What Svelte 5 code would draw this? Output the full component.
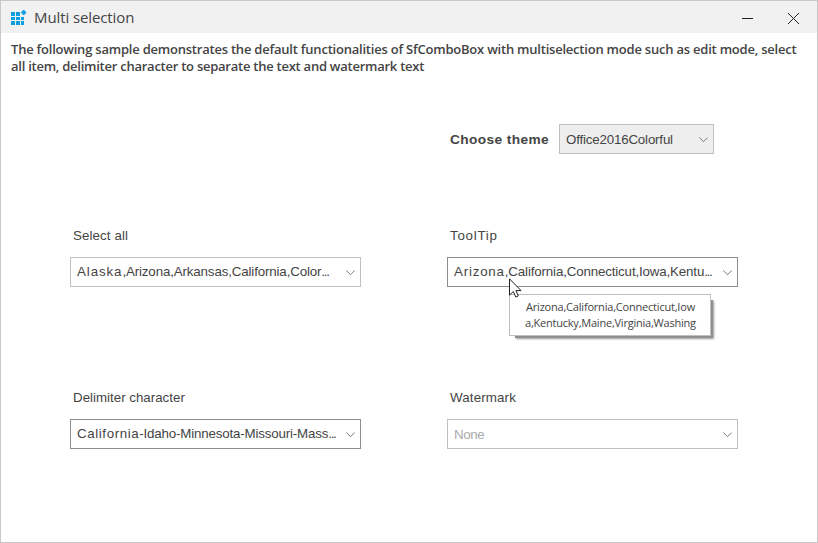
<script>
  const fields = [
    { label: 'Select all', labelGap: 0.1, border: '#c0c0c0', parts: [['Alaska', 0.9], [',Arizona,Arkansas,California,Color', -0.14], ['...', -1.3]] },
    { label: 'ToolTip', labelGap: 0.75, border: '#8e8e8e', parts: [['Arizona', 0.8], [',California,Connecticut,Iowa,Kentu', -0.15], ['...', -1.3]] },
    { label: 'Delimiter character', labelGap: 0, border: '#8e8e8e', parts: [['California', 0.6], ['-Idaho-Minnesota-Missouri-Mass', -0.17], ['...', -1.3]] },
    { label: 'Watermark', labelGap: 0.15, border: '#c0c0c0', placeholder: true, parts: [['None', -0.4]] }
  ];
</script>

{#snippet chevron()}
  <svg class="chevron" width="9" height="6" viewBox="0 0 9 6"><path d="M.3 .5 4.5 4.7 8.7 .5" /></svg>
{/snippet}

<div class="window">
  <header>
    <svg class="logo" width="16" height="16" viewBox="0 0 16 16" fill="#119ee0">
      <path d="M0 2h4v4H0zM5 2h4v4H5zM0 7h4v3H0zM5 7h4v3H5zM10 7h3v3h-3zM0 11h4v4H0zM5 11h4v4H5zM10 11h3v4h-3z" />
      <path d="M12 0h1.5l.6 1.4h1v2h-1L13.5 5H12l-.8-1.6h-1v-2h1z" />
    </svg>
    <h1>Multi selection</h1>
    <svg class="controls" width="60" height="14" viewBox="0 0 60 14">
      <path d="M0 7.5h11" /><path d="M46 2l11 11M57 2l-11 11" />
    </svg>
  </header>
  <p>
    <span class="l1">The following sample demonstrates the default functionalities of SfComboBox with multiselection mode such as edit mode, select</span><br />
    <span class="l2">all item, delimiter character to separate the text and watermark text</span>
  </p>
  <div class="theme">
    <b>Choose theme</b>
    <div class="combo small"><span>Office2016Colorful</span>{@render chevron()}</div>
  </div>
  <main>
    {#each fields as f}
      <section>
        <div class="label"><span style:letter-spacing="{f.labelGap}px">{f.label}</span></div>
        <div class="combo" class:placeholder={f.placeholder} style:border-color={f.border}>
          <span>{#each f.parts as [text, gap]}<span style:letter-spacing="{gap}px">{text}</span>{/each}</span>
          {@render chevron()}
        </div>
      </section>
    {/each}
  </main>
  <div class="tooltip"><span class="t1">Arizona,California,Connecticut,Iow</span><span class="t2">a,Kentucky,Maine,Virginia,Washing</span></div>
  <svg class="cursor" width="13" height="20" viewBox="0 0 13 20">
    <path d="M.5.8v16.4l3.8-3.7 2.5 5.5 2.5-1.1-2.4-5.3h5.1z" />
  </svg>
</div>

<style>
  .window { position: relative; box-sizing: border-box; width: 818px; height: 543px; border: 1px solid #c8c8c8; background: #fff; color: #444; font: 13.33px "Liberation Sans", Arial, sans-serif; overflow: hidden; white-space: nowrap; }
  header { display: flex; align-items: flex-start; height: 32px; background: #f1f1f1; }
  .logo { margin: 9px 0 0 10px; }
  h1 { margin: 6px 0 0 7px; font: 15px/20px "Open Sans", "Noto Sans", sans-serif; letter-spacing: -.1px; }
  .controls { margin: 10px 15px 0 auto; fill: none; stroke: #222; stroke-width: 1; }
  p { margin: 0; padding: 8px 0 0 10px; height: 83px; box-sizing: border-box; font: 600 13px/17px "Open Sans", "Noto Sans", sans-serif; letter-spacing: -.25px; }
  .l1 { letter-spacing: -.218px; }
  .theme { display: flex; align-items: center; margin-left: 449px; height: 30px; margin-top: 8px; }
  .theme b { width: 109px; font-size: 13.7px; letter-spacing: .4px; }
  .combo { box-sizing: border-box; width: 291px; height: 30px; border: 1px solid #c0c0c0; padding: 0 5px 0 6px; display: flex; align-items: center; justify-content: space-between; line-height: 28px; }
  .small { width: 155px; background: #eee; letter-spacing: -.18px; }
  .small > span, .placeholder > span { padding-top: 2px; }
  .chevron { flex: none; fill: none; stroke: #777; margin-top: 2px; }
  main { display: grid; grid-template-columns: 291px 291px; column-gap: 86px; grid-auto-rows: 162px; padding: 72px 0 0 69px; }
  .label { box-sizing: border-box; height: 31px; padding: 1px 0 0 3px; line-height: 18px; }
  .placeholder { color: #aaa; }
  .tooltip { position: absolute; left: 508px; top: 293px; box-sizing: border-box; width: 202px; height: 42px; border: 1px solid #c0c0c0; background: #fff; box-shadow: 4px 4px 0 -2px #8f8f8f, 4.5px 4.5px 2px -2px #999; padding: 4px 0 0 16px; font: 11px/16px "Open Sans", "Noto Sans", sans-serif; }
  .tooltip span { display: table; letter-spacing: -.2px; }
  .tooltip .t2 { letter-spacing: -.22px; margin-left: -1px; }
  .cursor { position: absolute; left: 508px; top: 277px; fill: #fff; stroke: #222; stroke-width: 1; }
</style>
